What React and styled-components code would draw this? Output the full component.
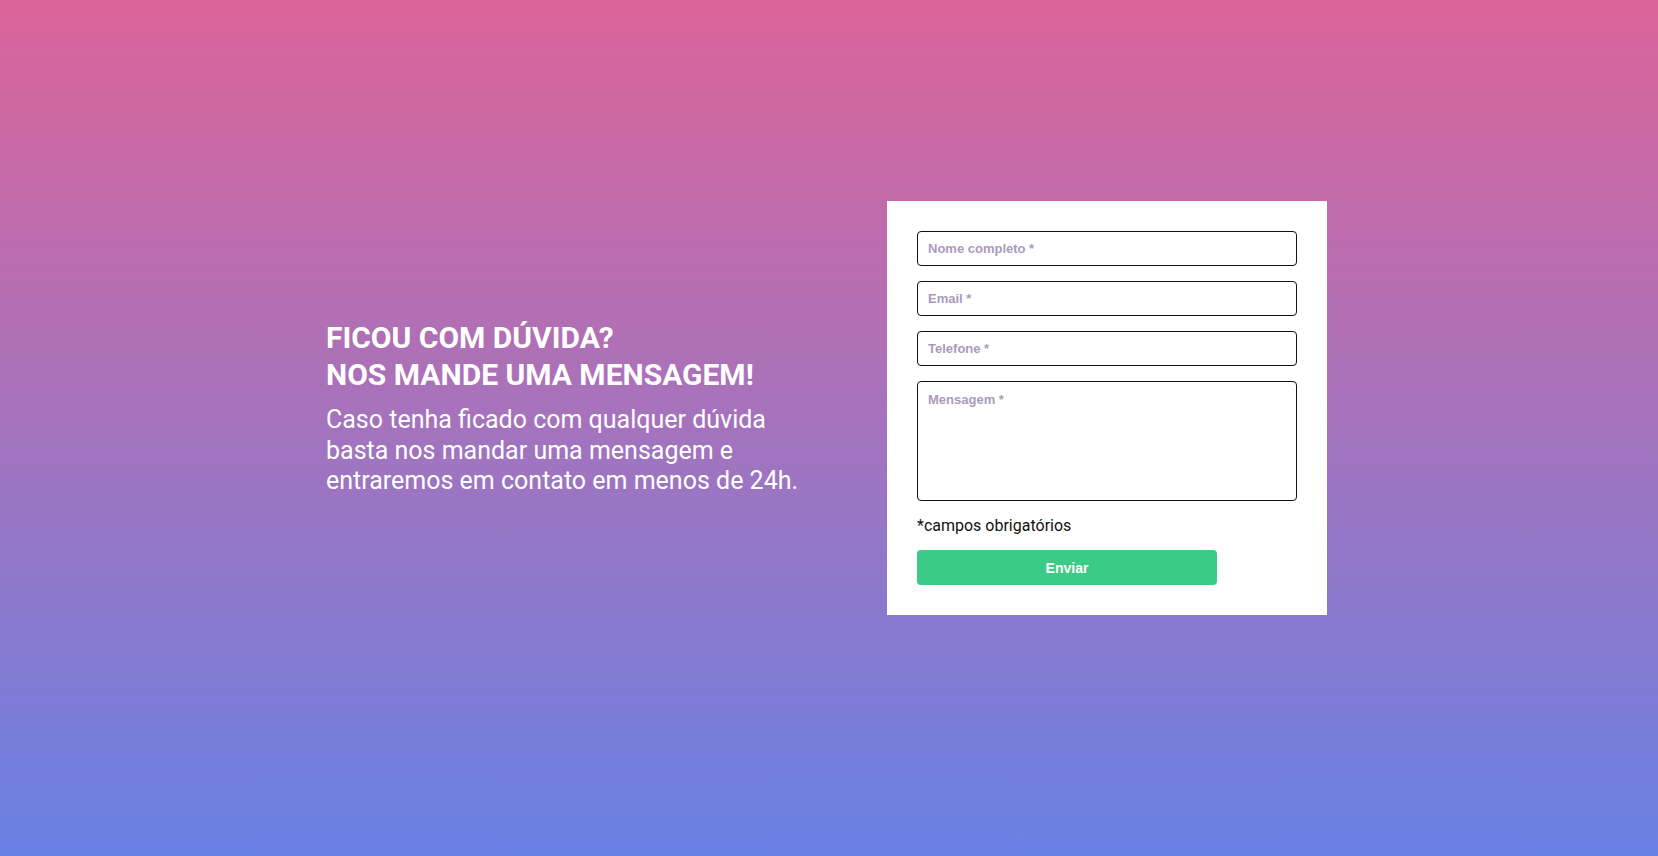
import styled, { createGlobalStyle } from "styled-components";

const GlobalStyle = createGlobalStyle`
  * {
    box-sizing: border-box;
  }

  html,
  body {
    margin: 0;
    padding: 0;
  }

  body {
    font-family: Roboto, "Liberation Sans", Arial, sans-serif;
  }
`;

const Page = styled.main`
  min-height: 856px;
  height: 100vh;
  display: flex;
  align-items: center;
  justify-content: center;
  padding: 0 6px 40px 0;
  background: linear-gradient(180deg, #db6399 0%, #a473bd 50%, #6881e4 100%);
`;

const Row = styled.section`
  width: 1002px;
  display: flex;
  align-items: center;
  justify-content: space-between;
`;

const Intro = styled.div`
  width: 482px;
  padding-left: 1px;
  color: #ffffff;
`;

const Title = styled.h1`
  margin: 0 0 12px;
  font-family: Roboto, sans-serif;
  font-size: 30px;
  font-weight: 700;
  line-height: 37px;
  text-transform: uppercase;
`;

const Lead = styled.p`
  margin: 0;
  font-family: Roboto, sans-serif;
  font-size: 25px;
  font-weight: 400;
  line-height: 30.5px;
`;

const Form = styled.form`
  width: 440px;
  background: #ffffff;
  padding: 30px;
  display: flex;
  flex-direction: column;
  gap: 15px;
`;

const fieldStyles = `
  width: 380px;
  border: 1px solid #111111;
  border-radius: 4px;
  background: #ffffff;
  font-family: "Liberation Sans", Arial, sans-serif;
  font-size: 13px;
  font-weight: 700;
  color: #333333;
  outline: none;

  &::placeholder {
    color: #a99bbb;
    opacity: 1;
  }
`;

const Input = styled.input`
  ${fieldStyles}
  height: 35px;
  padding: 0 10px;
`;

const TextArea = styled.textarea`
  ${fieldStyles}
  display: block;
  height: 120px;
  padding: 10px;
  resize: none;
`;

const Hint = styled.p`
  margin: 0;
  font-family: Roboto, sans-serif;
  font-size: 16px;
  line-height: 19px;
  color: #111111;
`;

const SubmitButton = styled.button`
  width: 300px;
  height: 35px;
  border: none;
  border-radius: 4px;
  background: #3ccb87;
  color: #ffffff;
  font-family: "Liberation Sans", Arial, sans-serif;
  font-size: 14px;
  font-weight: 700;
  cursor: pointer;
`;

const fields = [
  { name: "name", placeholder: "Nome completo *", type: "text" },
  { name: "email", placeholder: "Email *", type: "email" },
  { name: "phone", placeholder: "Telefone *", type: "tel" },
];

const App = () => (
  <>
    <GlobalStyle />
    <Page>
      <Row>
        <Intro>
          <Title>
            Ficou com dúvida?
            <br />
            Nos mande uma mensagem!
          </Title>
          <Lead>
            Caso tenha ficado com qualquer dúvida basta nos mandar uma
            mensagem e entraremos em contato em menos de 24h.
          </Lead>
        </Intro>
        <Form onSubmit={(e) => e.preventDefault()}>
          {fields.map((field) => (
            <Input key={field.name} {...field} />
          ))}
          <TextArea name="message" placeholder="Mensagem *" />
          <Hint>*campos obrigatórios</Hint>
          <SubmitButton type="submit">Enviar</SubmitButton>
        </Form>
      </Row>
    </Page>
  </>
);

export default App;
